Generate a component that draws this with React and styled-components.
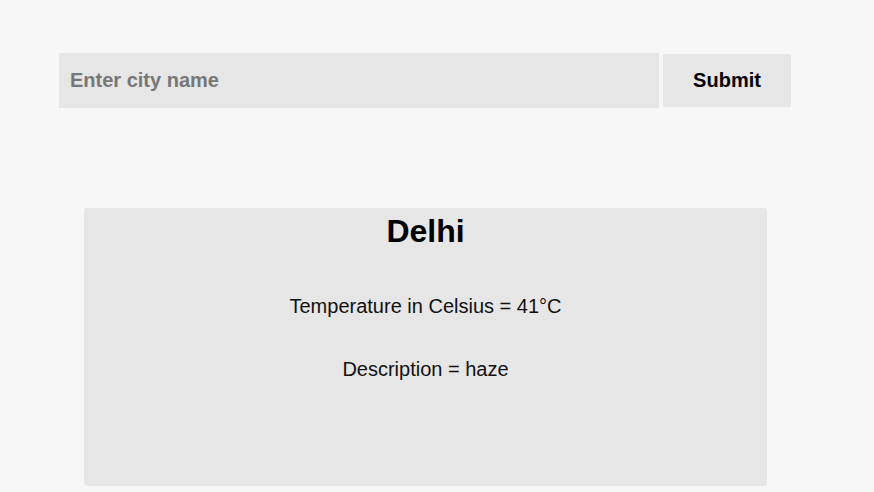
import React, { useState } from "react";
import styled, { createGlobalStyle } from "styled-components";

const GlobalStyle = createGlobalStyle`
  html, body {
    margin: 0;
    padding: 0;
    background-color: #f7f7f7;
    font-family: "Liberation Sans", Arial, sans-serif;
  }
`;

const Page = styled.div`
  display: flex;
  flex-direction: column;
  padding-top: 53px;
  padding-bottom: 6px;
`;

const Form = styled.form`
  display: flex;
  align-items: center;
  gap: 4px;
  margin-left: 59px;
`;

const Input = styled.input`
  width: 600px;
  height: 55px;
  box-sizing: border-box;
  padding: 0 11px;
  border: none;
  outline: none;
  background-color: #e6e6e6;
  font-family: inherit;
  font-size: 20px;
  font-weight: bold;
  color: #111;

  &::placeholder {
    color: #777;
  }
`;

const Button = styled.button`
  width: 128px;
  height: 53px;
  border: none;
  border-radius: 2px;
  background-color: #e6e6e6;
  font-family: inherit;
  font-size: 20px;
  font-weight: bold;
  color: #000;
  cursor: pointer;
`;

const Card = styled.div`
  display: flex;
  flex-direction: column;
  align-items: center;
  box-sizing: border-box;
  width: 683px;
  height: 278px;
  margin: 100px 0 0 84px;
  padding-top: 5px;
  border-radius: 3px;
  background-color: #e6e6e6;
`;

const City = styled.h1`
  margin: 0 0 45px;
  font-size: 32px;
  font-weight: bold;
  line-height: 37px;
  color: #000;
`;

const Info = styled.p`
  margin: 0 0 ${({ $space }) => $space}px;
  font-size: 20px;
  line-height: 23px;
  color: #111;
`;

const App = () => {
  const [city, setCity] = useState("");

  return (
    <>
      <GlobalStyle />
      <Page>
        <Form onSubmit={(e) => e.preventDefault()}>
          <Input
            placeholder="Enter city name"
            value={city}
            onChange={(e) => setCity(e.target.value)}
          />
          <Button type="submit">Submit</Button>
        </Form>
        <Card>
          <City>Delhi</City>
          <Info $space={40}>Temperature in Celsius = 41°C</Info>
          <Info $space={0}>Description = haze</Info>
        </Card>
      </Page>
    </>
  );
};

export default App;
